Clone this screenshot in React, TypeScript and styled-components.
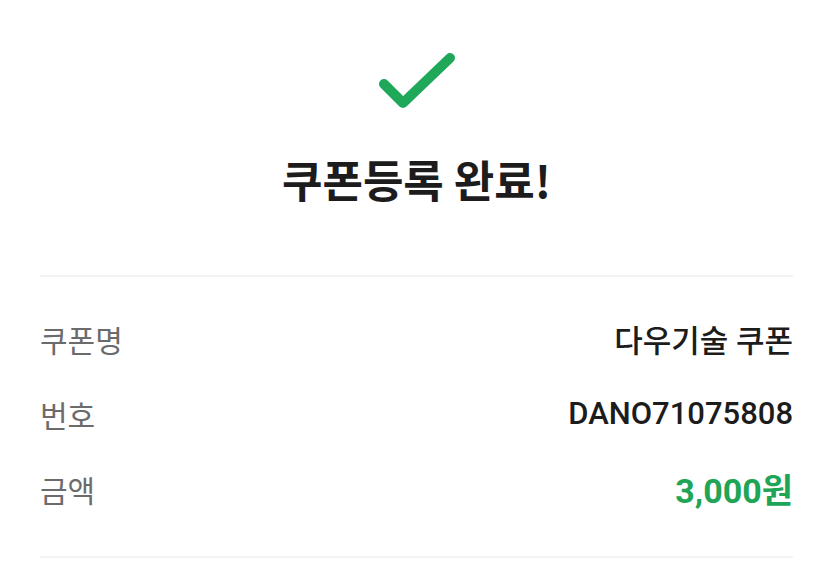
import React from "react";
import styled, { createGlobalStyle } from "styled-components";

const Global = createGlobalStyle`
  html, body { margin: 0; padding: 0; background: #ffffff; }
  body { font-family: Roboto, "Noto Sans CJK KR", sans-serif; }
`;

const Page = styled.div`
  width: 830px;
  min-height: 577px;
  box-sizing: border-box;
  padding: 0 37px 0 40px;
  background: #fff;
`;

const Header = styled.header`
  display: flex;
  flex-direction: column;
  align-items: center;
  padding-top: 51px;
  height: 275px;
  box-sizing: border-box;
`;

const CheckIcon = styled.svg`
  display: block;
  width: 80px;
  height: 62px;
`;

const Title = styled.h1`
  margin: 42px 0 0;
  font-family: "Noto Sans CJK KR", sans-serif;
  font-weight: 700;
  font-size: 44px;
  line-height: 48px;
  letter-spacing: 0;
  color: #1c1c1c;
`;

const Divider = styled.hr`
  margin: 0;
  border: none;
  height: 2px;
  background: #f3f3f3;
`;

const List = styled.dl`
  margin: 0;
  padding: 24px 0 30px;
`;

const Row = styled.div`
  display: flex;
  align-items: center;
  justify-content: space-between;
  height: 75px;
`;

const Label = styled.dt`
  font-family: Roboto, "Noto Sans CJK KR", sans-serif;
  font-size: 30px;
  color: #6b6b6b;
`;

const Value = styled.dd<{ $accent?: boolean }>`
  margin: 0;
  font-family: Roboto, "Noto Sans CJK KR", sans-serif;
  font-size: ${(p) => (p.$accent ? 34 : 31)}px;
  font-weight: ${(p) => (p.$accent ? 700 : 500)};
  color: ${(p) => (p.$accent ? "#20a456" : "#1c1c1c")};
`;

const rows = [
  { label: "쿠폰명", value: "다우기술 쿠폰" },
  { label: "번호", value: "DANO71075808" },
  { label: "금액", value: "3,000원", accent: true },
];

export default function App() {
  return (
    <Page>
      <Global />
      <Header>
        <CheckIcon viewBox="0 0 80 62">
          <path
            d="M7 33 L26 52 L73 7"
            fill="none"
            stroke="#1fa85a"
            strokeWidth="10"
            strokeLinecap="round"
            strokeLinejoin="round"
          />
        </CheckIcon>
        <Title>쿠폰등록 완료!</Title>
      </Header>
      <Divider />
      <List>
        {rows.map((r) => (
          <Row key={r.label}>
            <Label>{r.label}</Label>
            <Value $accent={r.accent}>{r.value}</Value>
          </Row>
        ))}
      </List>
      <Divider />
    </Page>
  );
}
